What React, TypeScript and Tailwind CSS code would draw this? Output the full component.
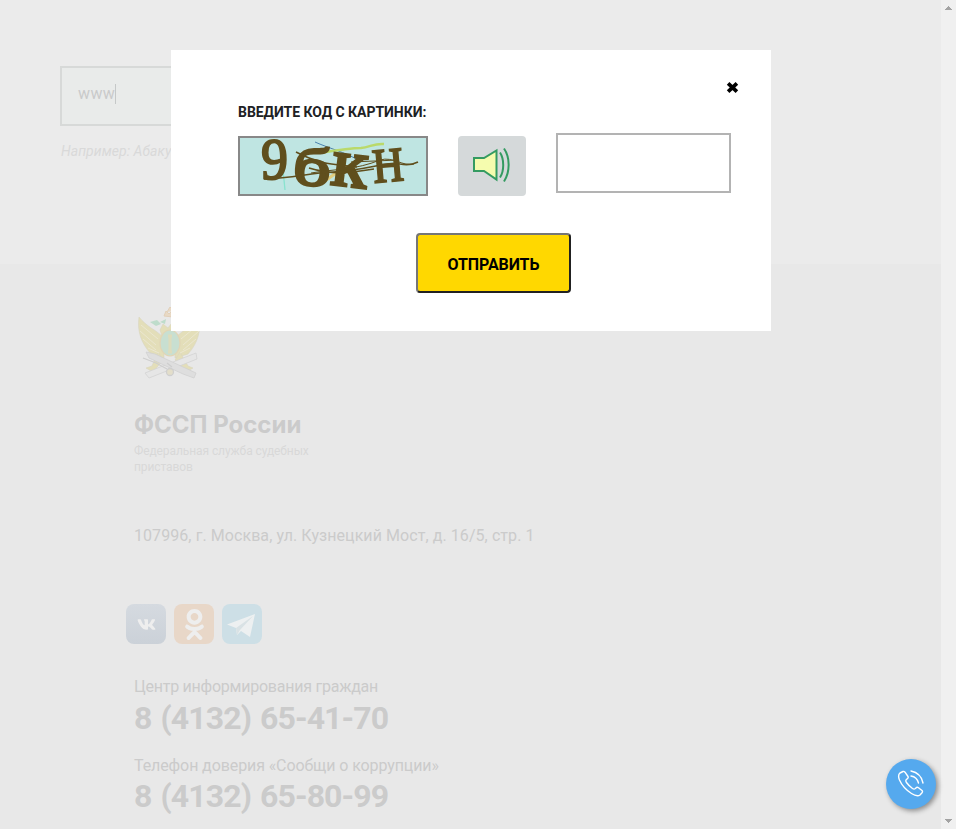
import type { ReactNode } from "react";
import { FaOdnoklassniki, FaVk } from "react-icons/fa";

function Emblem() {
  return (
    <svg className="ml-[2px] block h-[74px] w-[66px]" viewBox="0 0 66 74" fill="none">
      <g fill="#e3deb9" stroke="#d9d5c0" strokeWidth=".6">
        <path d="M3 10C1 24 5 36 15 47L28 51V31C24 27 20 24 15 21C11 18 7 15 3 10Z" />
        <path d="M63 10C65 24 62 36 52 47L39 51V31C43 27 47 24 52 21C56 18 60 15 63 10Z" />
        <path d="M27 32L24 23L27 17L32 21L35 17L41 18L38 24L42 32Z" />
        <path d="M22 45L16 59L10 61L17 65L27 53ZM44 45L52 59L57 61L50 65L39 53Z" />
      </g>
      <path d="M5 18L22 32M4 24L20 38M7 32L20 43M12 41L23 46M62 18L45 32M63 24L47 38M60 32L47 43M54 41L44 46" stroke="#ebe7d0" strokeWidth="1" />
      <path d="M14 15L21 13L25 17L20 19ZM24 15L30 12L29 17Z" fill="#bedccb" />
      <path d="M28 9L30 4L33 7L37 3V10ZM31 5L34 0L38 4" fill="#e8d9c5" stroke="#e2d0b9" />
      <ellipse cx="34" cy="36" rx="10" ry="13" fill="#c8dfd1" stroke="#e1d5b5" strokeWidth="1.2" />
      <path d="M32 29H36M34 29V45M32 45H36" stroke="#dddcbc" strokeWidth="3" />
      <path d="M9 66L60 46L61 52L13 71Z" fill="#e6e6e6" stroke="#d3d3d3" strokeWidth=".8" />
      <path d="M10 45L19 47L60 66L58 71L47 67L13 51Z" fill="#dedede" stroke="#d1d1d1" strokeWidth=".8" />
      <path d="M7 51L20 56L31 62M31 56L36 60" stroke="#cecece" strokeWidth="1.2" />
      <circle cx="34" cy="65" r="3.5" fill="#e3deca" stroke="#cfcfcf" strokeWidth="1.3" />
    </svg>
  );
}

function CaptchaPicture() {
  return (
    <svg className="block h-full w-full overflow-visible" viewBox="0 0 186 56" fill="none">
      <rect width="186" height="56" fill="#bfe5e2" />
      <path d="M75 4C88 10 105 14 120 23" stroke="#4b82ad" />
      <path d="M80 15C98 12 114 10 121 10C130 9 135 5 144 6" stroke="#bad96a" strokeWidth="2.5" />
      <path d="M43 32L45 52" stroke="#88e3cf" strokeWidth="1.3" />
      <path d="M82 45L99 33" stroke="#e1ce80" strokeWidth="3" />
      <g fill="#604f1d" stroke="#604f1d" fontFamily="Liberation Serif, serif">
        <text transform="translate(21 41) scale(.9 1)" fontSize="60" strokeWidth="2">9</text>
        <text transform="translate(52 46) rotate(4) scale(1.3 .95)" fontSize="57" strokeWidth="2.5">б</text>
        <text transform="translate(90 46) rotate(7) scale(1.08 1)" fontSize="68" strokeWidth="3">к</text>
        <text transform="translate(134 45) rotate(-5) scale(.83 1)" fontSize="70" strokeWidth="1.5">н</text>
      </g>
      <path d="M24 41C55 40 68 35 93 34C129 32 147 23 160 26Q170 28 178 24M56 14C83 28 96 26 117 29M69 30C98 39 118 33 134 31" stroke="#604f1d" strokeWidth="1.6" />
      <path d="M71 35C94 31 116 32 140 22C153 18 163 29 174 26M111 24L158 22" stroke="#604f1d" />
    </svg>
  );
}

function SpeakerIcon() {
  return (
    <svg className="relative -top-[2px] -left-px h-[38px] w-10" viewBox="0 0 40 38" fill="none" stroke="#349b61">
      <path d="M3 13H13L25.5 5.5V34.5L13 26H3Z" fill="#f5fcae" strokeWidth="2" />
      <path d="M29 7.5C33.3 14 33.3 26 29 32.5" strokeWidth="2" />
      <path d="M33 3.5C39.2 12.5 39.2 27 33 36.5" strokeWidth="2" />
    </svg>
  );
}

function TelegramIcon() {
  return (
    <svg className="h-10 w-10" viewBox="0 0 40 40">
      <path d="M5 20.5L33 10L28 33L19 27L15 31L14 24Z" fill="#edf0f1" />
      <path d="M14 24L31 12L18 26L15 31Z" fill="#d9e2e5" />
    </svg>
  );
}

function SocialTile({ className, children }: { className: string; children: ReactNode }) {
  return <a className={"flex h-10 w-10 items-center justify-center overflow-hidden rounded-lg " + className}>{children}</a>;
}

function Contact({ className, label, phone, phoneClassName }: { className: string; label: string; phone: string; phoneClassName: string }) {
  return (
    <div className="whitespace-nowrap text-[#cbcbcb]">
      <div className={"text-base leading-6 " + className}>{label}</div>
      <div className={"h-[38px] text-[32px] font-bold tracking-[-0.9px] [word-spacing:2px] " + phoneClassName}>{phone}</div>
    </div>
  );
}

function CaptchaDialog() {
  return (
    <div className="absolute top-[50px] left-[171px] h-[281px] w-[600px] bg-white pt-[28px] pl-[67px]">
      <div className="flex h-5 justify-end pr-[32px]">
        <svg className="mt-[3px] h-[13px] w-[13px]" viewBox="0 0 13 13">
          <path d="M2.1 2.3L10.9 10.7M10.9 2.3L2.1 10.7" stroke="#000" strokeWidth="3.7" />
        </svg>
      </div>
      <div className="mt-1 h-5 text-sm leading-5 font-bold tracking-[-0.04px] whitespace-nowrap text-[#202124]">ВВЕДИТЕ КОД С КАРТИНКИ:</div>
      <div className="mt-[11px] flex gap-[30px]">
        <div className="mt-[3px] h-[60px] w-[190px] border-2 border-[#888888]"><CaptchaPicture /></div>
        <button className="mt-[3px] flex h-[60px] w-[68px] items-center justify-center rounded bg-[#d5d9da]"><SpeakerIcon /></button>
        <input className="h-[60px] w-[175px] border-2 border-[#b3b3b3] bg-white px-3 outline-none" />
      </div>
      <button className="mt-[37px] ml-[178px] flex h-[60px] w-[155px] items-center justify-center rounded border-2 border-t-[#767676] border-r-[#212121] border-b-[#212121] border-l-[#767676] bg-[#ffd800] pt-1 text-base font-bold tracking-[-0.1px] text-black">ОТПРАВИТЬ</button>
    </div>
  );
}

export default function App() {
  return (
    <div className="relative flex h-[829px] w-[956px] overflow-hidden bg-[#e8e8e8] font-['Roboto','Liberation_Sans',sans-serif]">
      <main className="w-[941px] shrink-0">
        <section className="h-[264px] bg-[#ebebeb] pt-[66px] pl-[60px]">
          <div className="flex h-[60px] w-[680px] border-2 border-[#d7d9d8] bg-[#e9ebea] pt-4 pl-4">
            <span className="flex h-5 items-center border-r border-[#c5c8c8] text-base tracking-[0.4px] text-[#c9caca]">www</span>
          </div>
          <p className="mt-[15px] pl-px text-sm leading-5 tracking-[0.05px] text-[#d9d9d9] italic">Например: Абакумов Иван</p>
        </section>
        <footer className="pt-[43px] pl-[134px]">
          <Emblem />
          <h2 className="mt-[28px] h-8 font-['Inter'] text-2xl leading-8 font-bold text-[#cbcbcb]">ФССП России</h2>
          <p className="mt-[2px] w-[195px] text-xs leading-4 tracking-[-0.09px] text-[#d8d8d8]">Федеральная служба судебных приставов</p>
          <p className="mt-[49px] h-6 text-base leading-6 tracking-[0.07px] whitespace-nowrap text-[#cbcbcb]">107996, г. Москва, ул. Кузнецкий Мост, д. 16/5, стр. 1</p>
          <div className="mt-[56px] -ml-2 flex gap-2 text-[#eeeeee]">
            <SocialTile className="bg-linear-to-b from-[#d5dae0] to-[#cbd1d8]"><FaVk size={19} /></SocialTile>
            <SocialTile className="bg-[#e8d7c8]"><FaOdnoklassniki size={31} /></SocialTile>
            <SocialTile className="bg-[#cddfe6]"><TelegramIcon /></SocialTile>
          </div>
          <div className="mt-[31px] flex flex-col gap-[17px]">
            <Contact className="tracking-[-0.24px]" label="Центр информирования граждан" phone="8 (4132) 65-41-70" phoneClassName="leading-[38px]" />
            <Contact className="tracking-[-0.1px]" label="Телефон доверия «Сообщи о коррупции»" phone="8 (4132) 65-80-99" phoneClassName="leading-9" />
          </div>
        </footer>
      </main>
      <aside className="flex w-[15px] shrink-0 flex-col items-center justify-between bg-[#f0f0f0] pt-[6px] pb-[6px]">
        <svg width="7" height="4" viewBox="0 0 7 4"><path d="M3 0H4V1H5V2H6V3H7V4H0V3H1V2H2V1H3Z" fill="#a3a3a3" /></svg>
        <svg width="7" height="4" viewBox="0 0 7 4"><path d="M0 0H7V1H6V2H5V3H4V4H3V3H2V2H1V1H0Z" fill="#a3a3a3" /></svg>
      </aside>
      <CaptchaDialog />
      <button className="absolute top-[759px] left-[886px] flex h-[50px] w-[50px] items-center justify-center rounded-full bg-[#55a9ee] shadow-[2px_2px_5px_rgba(0,0,0,0.4)]">
        <svg className="h-7 w-7" viewBox="0 0 28 28" fill="none" stroke="white" strokeWidth="1.4" strokeLinecap="round" strokeLinejoin="round">
          <path d="M3 3L6 1.5Q7 1 8 2.2L11 6.5Q11.6 7.6 10.5 8.5L9 10Q8.5 11 9.5 12.5Q12 16 15.5 18.5Q17 19.5 18 18.8L19.5 17.5Q20.5 17 21.5 17.7L25 20.5Q26 21.5 25 22.8L23 25Q20 27 14.5 23.5Q6 18 2.5 10Q.5 5 3 3Z" />
          <path d="M14 1Q24 3 26 13M14 6Q20 7 21.5 13" />
        </svg>
      </button>
    </div>
  );
}
